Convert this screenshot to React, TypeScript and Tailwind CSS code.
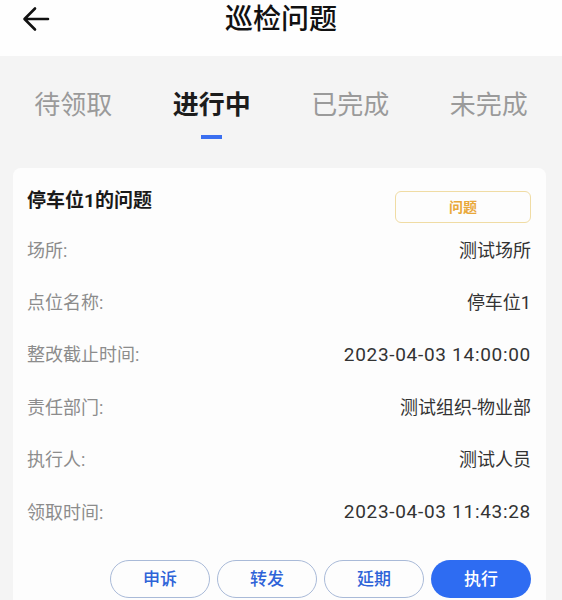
import React from "react";

const rows: [string, string, boolean][] = [
  ["场所:", "测试场所", false],
  ["点位名称:", "停车位1", false],
  ["整改截止时间:", "2023-04-03 14:00:00", true],
  ["责任部门:", "测试组织-物业部", false],
  ["执行人:", "测试人员", false],
  ["领取时间:", "2023-04-03 11:43:28", true],
];

const tabs = ["待领取", "进行中", "已完成", "未完成"];

export default function App() {
  return (
    <div
      className="w-[562px] h-[600px] overflow-hidden bg-[#f4f4f4]"
      style={{ fontFamily: 'Roboto, "Noto Sans CJK SC", sans-serif' }}
    >
      {/* Header */}
      <div className="relative h-[56px] bg-[#fefefe]">
        <div className="absolute left-[22px] top-[6px]">
          <svg width="28" height="26" viewBox="0 0 28 26" fill="none">
            <path
              d="M26 13H3M13 2.5L2.5 13L13 23.5"
              stroke="#111"
              strokeWidth="2.6"
              strokeLinecap="round"
              strokeLinejoin="round"
            />
          </svg>
        </div>
        <div className="flex h-[40px] items-center justify-center text-[28px] leading-none text-[#111] font-medium">
          巡检问题
        </div>
      </div>

      {/* Tabs */}
      <div className="flex h-[112px] px-[4px]">
        {tabs.map((t, i) => (
          <div key={t} className="flex flex-1 flex-col items-center pt-[36px]">
            <div
              className={
                i === 1
                  ? "text-[26px] leading-[26px] font-bold text-[#1c1c1c]"
                  : "text-[26px] leading-[26px] text-[#9a9a9a]"
              }
            >
              {t}
            </div>
            {i === 1 && <div className="mt-[17px] h-[4px] w-[21px] bg-[#3b6ff0]" />}
          </div>
        ))}
      </div>

      {/* Card */}
      <div className="mx-[13px] w-[533px] rounded-t-[8px] bg-[#fdfdfd] pl-[14px] pr-[15px] pt-[23px]">
        <div className="flex items-start justify-between h-[33px]">
          <div className="text-[19px] leading-[20px] font-bold text-[#1a1a1a]">停车位1的问题</div>
          <div className="flex h-[32px] w-[136px] items-center justify-center rounded-[6px] border border-[#f0dca4] text-[14px] font-bold text-[#e9a83a]">
            问题
          </div>
        </div>
        {rows.map(([k, v, isDate]) => (
          <div key={k} className="flex h-[52.4px] items-center justify-between">
            <span className="text-[18px] text-[#8c8c8c]">{k}</span>
            <span
              className={
                isDate
                  ? "text-[19px] tracking-[0.7px] text-[#333]"
                  : "text-[18px] text-[#333]"
              }
            >
              {v}
            </span>
          </div>
        ))}
        <div className="mt-[22px] flex justify-end gap-[7px] pb-[10px]">
          {["申诉", "转发", "延期"].map((b) => (
            <button
              key={b}
              className="flex h-[38px] w-[100px] items-center justify-center rounded-full border border-[#a9bad8] text-[17px] font-medium text-[#2e63d8]"
            >
              {b}
            </button>
          ))}
          <button className="flex h-[38px] w-[100px] items-center justify-center rounded-full bg-[#2e6cf2] text-[17px] font-medium text-white">
            执行
          </button>
        </div>
      </div>
    </div>
  );
}
